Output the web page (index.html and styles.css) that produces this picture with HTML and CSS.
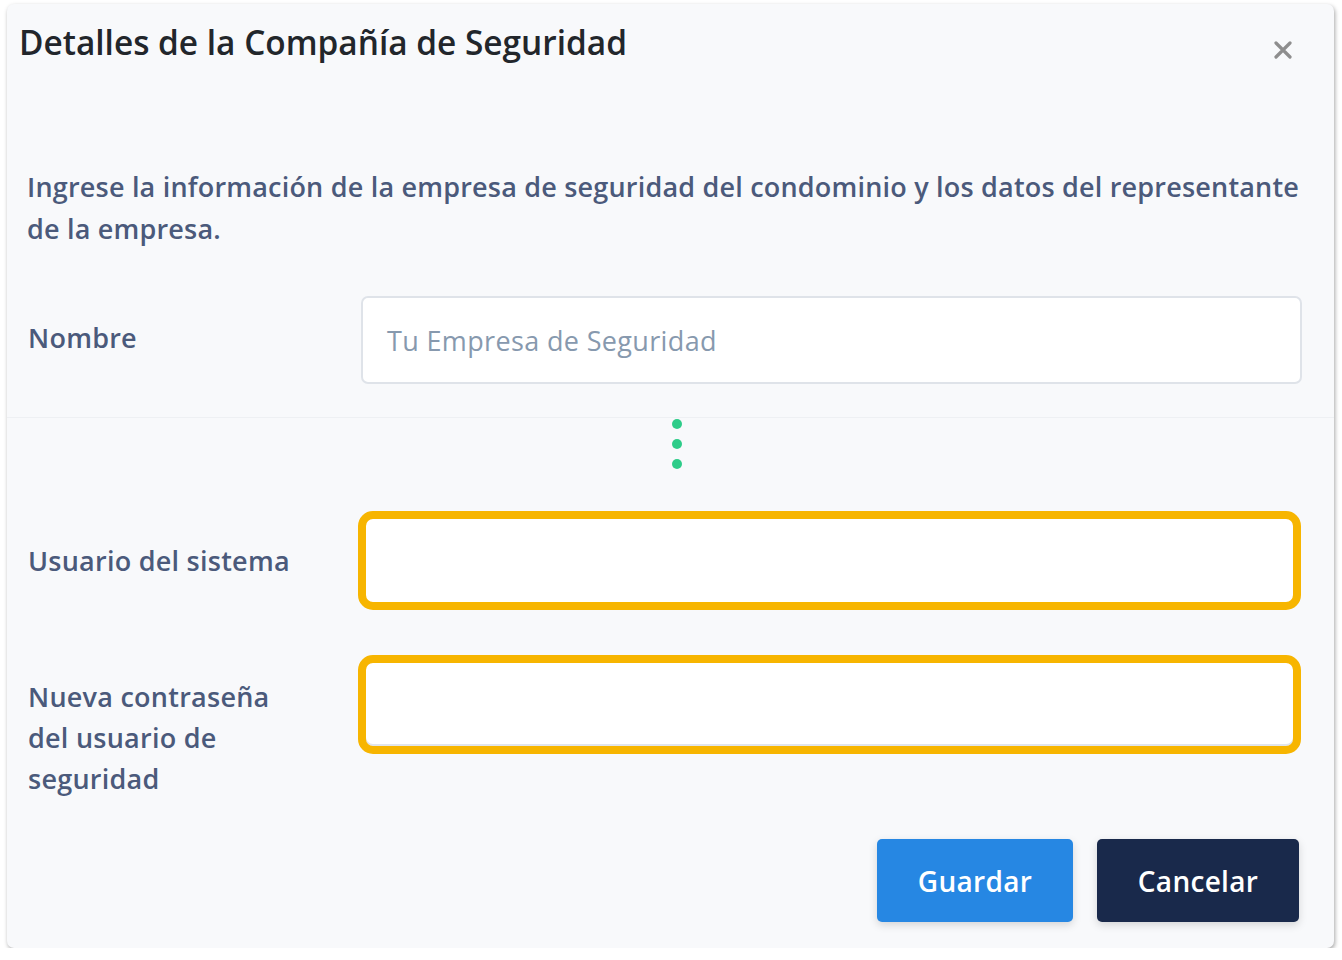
FILE: index.html
```html
<!DOCTYPE html>
<html lang="es">
<head>
<meta charset="utf-8">
<title>Detalles de la Compañía de Seguridad</title>
<link rel="stylesheet" href="styles.css">
</head>
<body>
<div class="modal">
  <div class="modal-header">
    <h1 class="modal-title">Detalles de la Compañía de Seguridad</h1>
    <button class="close" aria-label="Cerrar">
      <svg width="18" height="18" viewBox="0 0 18 18"><path d="M2 2 L16 16 M16 2 L2 16" stroke="#8e8e8e" stroke-width="3.2" stroke-linecap="round"/></svg>
    </button>
  </div>
  <div class="section">
    <p class="intro">Ingrese la información de la empresa de seguridad del condominio y los datos del representante de la empresa.</p>
    <div class="form-row center">
      <label class="label raised">Nombre</label>
      <div class="input placeholder">Tu Empresa de Seguridad</div>
    </div>
  </div>
  <div class="divider"></div>
  <div class="dots"><span></span><span></span><span></span></div>
  <div class="section lower">
    <div class="form-row center">
      <label class="label">Usuario del sistema</label>
      <div class="input highlight"></div>
    </div>
    <div class="form-row top">
      <label class="label multi">Nueva contraseña del usuario de seguridad</label>
      <div class="input highlight bottom-line"></div>
    </div>
  </div>
  <div class="footer">
    <button class="btn btn-primary">Guardar</button>
    <button class="btn btn-dark">Cancelar</button>
  </div>
</div>
</body>
</html>
```
FILE: styles.css
```css
* { box-sizing: border-box; }
html, body { margin: 0; padding: 0; background: #ffffff; }
body { font-family: "Open Sans", "Noto Sans", sans-serif; }

.modal {
  margin: 4px 0 0 7px;
  width: 1327px;
  height: 944px;
  background: #f8f9fb;
  border-radius: 7px;
  box-shadow: 1px 2px 4px rgba(0,0,0,0.35);
  display: flex;
  flex-direction: column;
}

.modal-header {
  display: flex;
  justify-content: space-between;
  align-items: flex-start;
  padding: 16px 42px 0 12px;
}
.modal-title {
  margin: 0;
  font-size: 33.4px;
  line-height: 44px;
  font-weight: 600;
  color: #22262b;
}
.close {
  background: none;
  border: 0;
  padding: 0;
  margin-top: 21px;
  width: 18px;
  height: 18px;
  display: flex;
}

.section { padding: 0 32px 0 20px; }
.intro {
  margin: 102px 0 0;
  font-size: 27px;
  line-height: 42px;
  font-weight: 600;
  color: #4b5a7b;
  letter-spacing: 0.2px;
}

.form-row {
  display: grid;
  grid-template-columns: 334px 1fr;
}
.form-row.center { align-items: center; }
.form-row.top { align-items: start; }
.section > .form-row:first-of-type { margin-top: 46px; }

.label {
  font-size: 27px;
  line-height: 41px;
  font-weight: 600;
  color: #4b5a7b;
  padding-left: 1px;
  letter-spacing: 0.25px;
}
.label.raised { padding-bottom: 5px; }
.label.multi { padding-top: 21px; padding-right: 50px; }

.input {
  height: 88px;
  background: #ffffff;
  border: 2px solid #dfe3e9;
  border-radius: 7px;
}
.placeholder {
  display: flex;
  align-items: center;
  padding-left: 24px;
  font-size: 27px;
  letter-spacing: 0.35px;
  color: #8799ae;
  font-weight: 400;
}

.divider {
  margin-top: 33px;
  border-top: 1px solid #eef0f3;
}

.dots {
  display: flex;
  flex-direction: column;
  gap: 10px;
  margin: 1px 0 0 665px;
}
.dots span {
  width: 10px;
  height: 10px;
  border-radius: 50%;
  background: #2ecc89;
}

.lower .form-row:first-child { margin-top: 42px; }
.lower .form-row + .form-row { margin-top: 45px; }
.highlight {
  height: 99px;
  border: 8px solid #f7b500;
  border-radius: 15px;
  margin-left: -3px;
  margin-right: 1px;
}
.bottom-line { box-shadow: inset 0 -2px 0 #e1e5ec; }

.footer {
  margin-top: auto;
  display: flex;
  justify-content: flex-end;
  gap: 24px;
  padding: 0 35px 26px 0;
}
.btn {
  height: 83px;
  border: 0;
  border-radius: 5px;
  font-family: "Open Sans", "Noto Sans", sans-serif;
  font-size: 28px;
  font-weight: 600;
  color: #ffffff;
  letter-spacing: 0.3px;
  box-shadow: 0 3px 8px rgba(0,0,0,0.15);
}
.btn-primary { width: 196px; background: #2687e3; }
.btn-dark { width: 202px; background: #19294b; }
```
